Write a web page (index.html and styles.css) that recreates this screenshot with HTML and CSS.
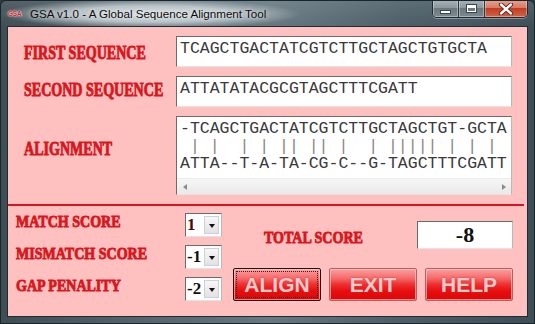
FILE: index.html
```html
<!DOCTYPE html>
<html>
<head>
<meta charset="utf-8">
<title>GSA v1.0</title>
<link rel="stylesheet" href="styles.css">
</head>
<body>
<div class="window">
  <div class="titlebar">
    <span class="app-icon">GSA</span>
    <span class="title">GSA v1.0 - A Global Sequence Alignment Tool</span>
    <div class="caption">
      <div class="cbtn cmin"><span class="min-glyph"></span></div>
      <div class="cbtn cmax"><span class="max-glyph"></span></div>
      <div class="cbtn cclose">
        <svg width="16" height="12" viewBox="0 0 16 12">
          <path d="M3 1.5 L13 10.5 M13 1.5 L3 10.5" stroke="#5a1c14" stroke-width="4.2" stroke-linecap="round"/>
          <path d="M3 1.5 L13 10.5 M13 1.5 L3 10.5" stroke="#ffffff" stroke-width="2.4" stroke-linecap="round"/>
        </svg>
      </div>
    </div>
  </div>
  <div class="frame">
    <div class="client">
      <div class="top">
        <div class="lbl big l1">FIRST SEQUENCE</div>
        <div class="tbox">TCAGCTGACTATCGTCTTGCTAGCTGTGCTA</div>
        <div class="lbl big l2">SECOND SEQUENCE</div>
        <div class="tbox">ATTATATACGCGTAGCTTTCGATT</div>
        <div class="lbl big l3">ALIGNMENT</div>
        <div class="abox">
          <pre class="aln">-TCAGCTGACTATCGTCTTGCTAGCTGT-GCTA
<span class="bars"> | |  | | || || |  | ||||| | | | </span>
ATTA--T-A-TA-CG-C--G-TAGCTTTCGATT</pre>
          <div class="hscroll">
            <span class="arr arr-l"></span>
            <span class="arr arr-r"></span>
          </div>
        </div>
      </div>
      <div class="divider"></div>
      <div class="bottom">
        <div class="params">
          <div class="lbl small">MATCH SCORE</div>
          <div class="combo"><span class="cval sel">1</span><span class="dd"><span class="tri"></span></span></div>
          <div class="lbl small">MISMATCH SCORE</div>
          <div class="combo"><span class="cval">-1</span><span class="dd"><span class="tri"></span></span></div>
          <div class="lbl small">GAP PENALITY</div>
          <div class="combo"><span class="cval">-2</span><span class="dd"><span class="tri"></span></span></div>
        </div>
        <div class="right">
          <div class="score-row">
            <div class="lbl small total">TOTAL SCORE</div>
            <div class="scorebox">-8</div>
          </div>
          <div class="buttons">
            <div class="btn focused"><span>ALIGN</span></div>
            <div class="btn"><span>EXIT</span></div>
            <div class="btn"><span>HELP</span></div>
          </div>
        </div>
      </div>
    </div>
  </div>
</div>
</body>
</html>
```

FILE: styles.css
```css
* { box-sizing: border-box; }

html, body {
  margin: 0;
  padding: 0;
  width: 535px;
  height: 324px;
  overflow: hidden;
  background: #2b3a42;
}

.window {
  width: 535px;
  height: 324px;
  display: flex;
  flex-direction: column;
  border: 1px solid #1a252b;
  border-radius: 6px 6px 0 0;
  background:
    linear-gradient(to bottom, rgba(255,255,255,0.10), rgba(255,255,255,0) 26px),
    linear-gradient(to right, #3f4e55 0%, #56676f 30%, #667880 50%, #4c5e67 75%, #3c4f59 100%);
  overflow: hidden;
}

/* ---------- title bar ---------- */
.titlebar {
  height: 25px;
  flex: none;
  display: flex;
  align-items: flex-start;
  background:
    radial-gradient(ellipse 150px 15px at 150px 13px, rgba(226,232,234,0.95) 0%, rgba(214,222,226,0.75) 55%, rgba(200,210,214,0) 100%);
}

.app-icon {
  margin: 9px 0 0 7px;
  width: 16px;
  font: bold 6.5px/8px "Liberation Sans", Arial, sans-serif;
  color: #d0202a;
  letter-spacing: -0.2px;
  text-shadow: 0 0 1px #fff, 0 0 2px #fff;
}

.title {
  margin: 5px 0 0 6px;
  font: 11.6px/16px "Liberation Sans", Arial, sans-serif;
  color: #0c0c0c;
  white-space: nowrap;
  text-shadow: 0 0 4px rgba(255,255,255,0.9);
}

.caption {
  margin-left: auto;
  margin-right: 6px;
  margin-top: -1px;
  display: flex;
  height: 18px;
  border: 1px solid #1e2a30;
  border-top: none;
  border-radius: 0 0 5px 5px;
  overflow: hidden;
  box-shadow: 0 1px 0 rgba(255,255,255,0.35);
}

.cbtn {
  height: 17px;
  display: flex;
  align-items: center;
  justify-content: center;
  border-right: 1px solid #26343b;
  background: linear-gradient(to bottom, #a9b4b9 0%, #8b989e 45%, #6a787e 50%, #7d8b91 100%);
  box-shadow: inset 0 0 0 1px rgba(255,255,255,0.35);
}
.cmin { width: 26px; }
.cmax { width: 26px; }
.cclose {
  width: 42px;
  border-right: none;
  background: linear-gradient(to bottom, #e5a596 0%, #d77a64 45%, #c23d22 50%, #d26445 100%);
}

.min-glyph {
  width: 11px;
  height: 4px;
  margin-top: 6px;
  background: #fff;
  border: 1px solid #3a464c;
}
.max-glyph {
  width: 11px;
  height: 9px;
  border: 1px solid #3a464c;
  box-shadow: inset 0 0 0 1px #fff, inset 0 2px 0 1px #fff;
}

/* ---------- frame / client ---------- */
.frame {
  flex: 1;
  display: flex;
  padding: 0 6px 6px 6px;
}

.client {
  flex: 1;
  border: 1px solid #1f2c33;
  background: #ffc0c0;
  display: flex;
  flex-direction: column;
}

.lbl {
  color: #d8161c;
  font-family: "Liberation Serif", "Times New Roman", serif;
  font-weight: bold;
  white-space: nowrap;
  -webkit-text-stroke: 0.85px #d8161c;
  transform-origin: 0 50%;
}
.lbl.big {
  font-size: 18px;
  line-height: 20px;
  transform: scaleX(0.78);
}
.lbl.small {
  font-size: 16.5px;
  line-height: 18px;
  transform: scaleX(0.85);
}

.top {
  display: grid;
  grid-template-columns: 152px 336px;
  grid-template-rows: 31px 31px 79px;
  row-gap: 9px;
  padding: 9px 0 0 16px;
}
.l1 { align-self: start; margin-top: 7px; }
.l2 { align-self: start; margin-top: 4px; }
.l3 { align-self: start; margin-top: 23px; }

.tbox, .abox, .scorebox, .combo {
  background: #fff;
  border: 1px solid;
  border-color: #6b6b6b #b9b9b9 #e4e4e4 #6b6b6b;
}

.tbox {
  font: 16.5px/18px "Liberation Mono", "Courier New", monospace;
  color: #3a3a3a;
  padding: 3px 0 0 3px;
  white-space: nowrap;
  overflow: hidden;
}

.abox {
  display: flex;
  flex-direction: column;
  overflow: hidden;
}
.aln {
  margin: 0;
  padding: 3px 0 0 3px;
  height: 61px;
  font: 16.5px/17.5px "Liberation Mono", "Courier New", monospace;
  color: #3a3a3a;
  white-space: pre;
}
.bars { color: #858585; }

.hscroll {
  height: 16px;
  margin-top: auto;
  display: flex;
  align-items: center;
  justify-content: space-between;
  padding: 0 5px 0 6px;
  background: linear-gradient(to bottom, #f6f6f6, #e9e9e9);
  border-top: 1px solid #ececec;
}
.arr {
  width: 0;
  height: 0;
  border-top: 3.5px solid transparent;
  border-bottom: 3.5px solid transparent;
}
.arr-l { border-right: 4px solid #8a8a8a; }
.arr-r { border-left: 4px solid #8a8a8a; }

.divider {
  margin-top: 9px;
  width: 516px;
  height: 2px;
  background: #d8141c;
}

/* ---------- bottom ---------- */
.bottom {
  display: flex;
  padding: 7px 0 0 8px;
}

.params {
  display: grid;
  grid-template-columns: 169px 37px;
  grid-template-rows: 24px 24px 24px;
  row-gap: 8px;
}
.params .lbl { align-self: start; }

.combo {
  display: flex;
  align-items: stretch;
}
.cval {
  flex: 1;
  padding-left: 1px;
  font: bold 17px/22px "Liberation Serif", "Times New Roman", serif;
  color: #111;
}
.cval.sel { color: #4a0c12; }
.dd {
  width: 15px;
  margin: 2px 2px 2px 0;
  display: flex;
  align-items: center;
  justify-content: center;
  background: linear-gradient(to bottom, #f7f7f7, #e2e2e2);
  border: 1px solid #d0d0d0;
}
.tri {
  width: 0;
  height: 0;
  margin-top: 2px;
  border-left: 3.5px solid transparent;
  border-right: 3.5px solid transparent;
  border-top: 4px solid #111;
}

.right {
  width: 280px;
  margin-left: 11px;
  display: flex;
  flex-direction: column;
}

.score-row {
  margin-top: 8px;
  height: 28px;
  display: flex;
  align-items: flex-start;
}
.total { margin: 8px 0 0 31px; }

.scorebox {
  margin-left: auto;
  width: 96px;
  height: 28px;
  text-align: center;
  font: bold 22px/26px "Liberation Serif", "Times New Roman", serif;
  color: #111;
}

.buttons {
  margin-top: 19px;
  display: flex;
  gap: 8px;
}

.btn {
  width: 88px;
  height: 33px;
  display: flex;
  align-items: center;
  justify-content: center;
  border: 1px solid #b86060;
  border-radius: 2px;
  background: linear-gradient(to bottom, #fca0a0 0%, #f56a6a 30%, #ee3030 50%, #e61010 70%, #dc0606 100%);
  box-shadow: inset 0 0 0 1px rgba(255,210,210,0.6);
  font: bold 21px/24px "Liberation Sans", Arial, sans-serif;
  color: #fccaca;
  text-shadow: 0 0 2px #e03030;
}
.btn.focused {
  border: 1px solid #151515;
  outline: 1px dotted #3a2020;
  outline-offset: -4px;
}
```
